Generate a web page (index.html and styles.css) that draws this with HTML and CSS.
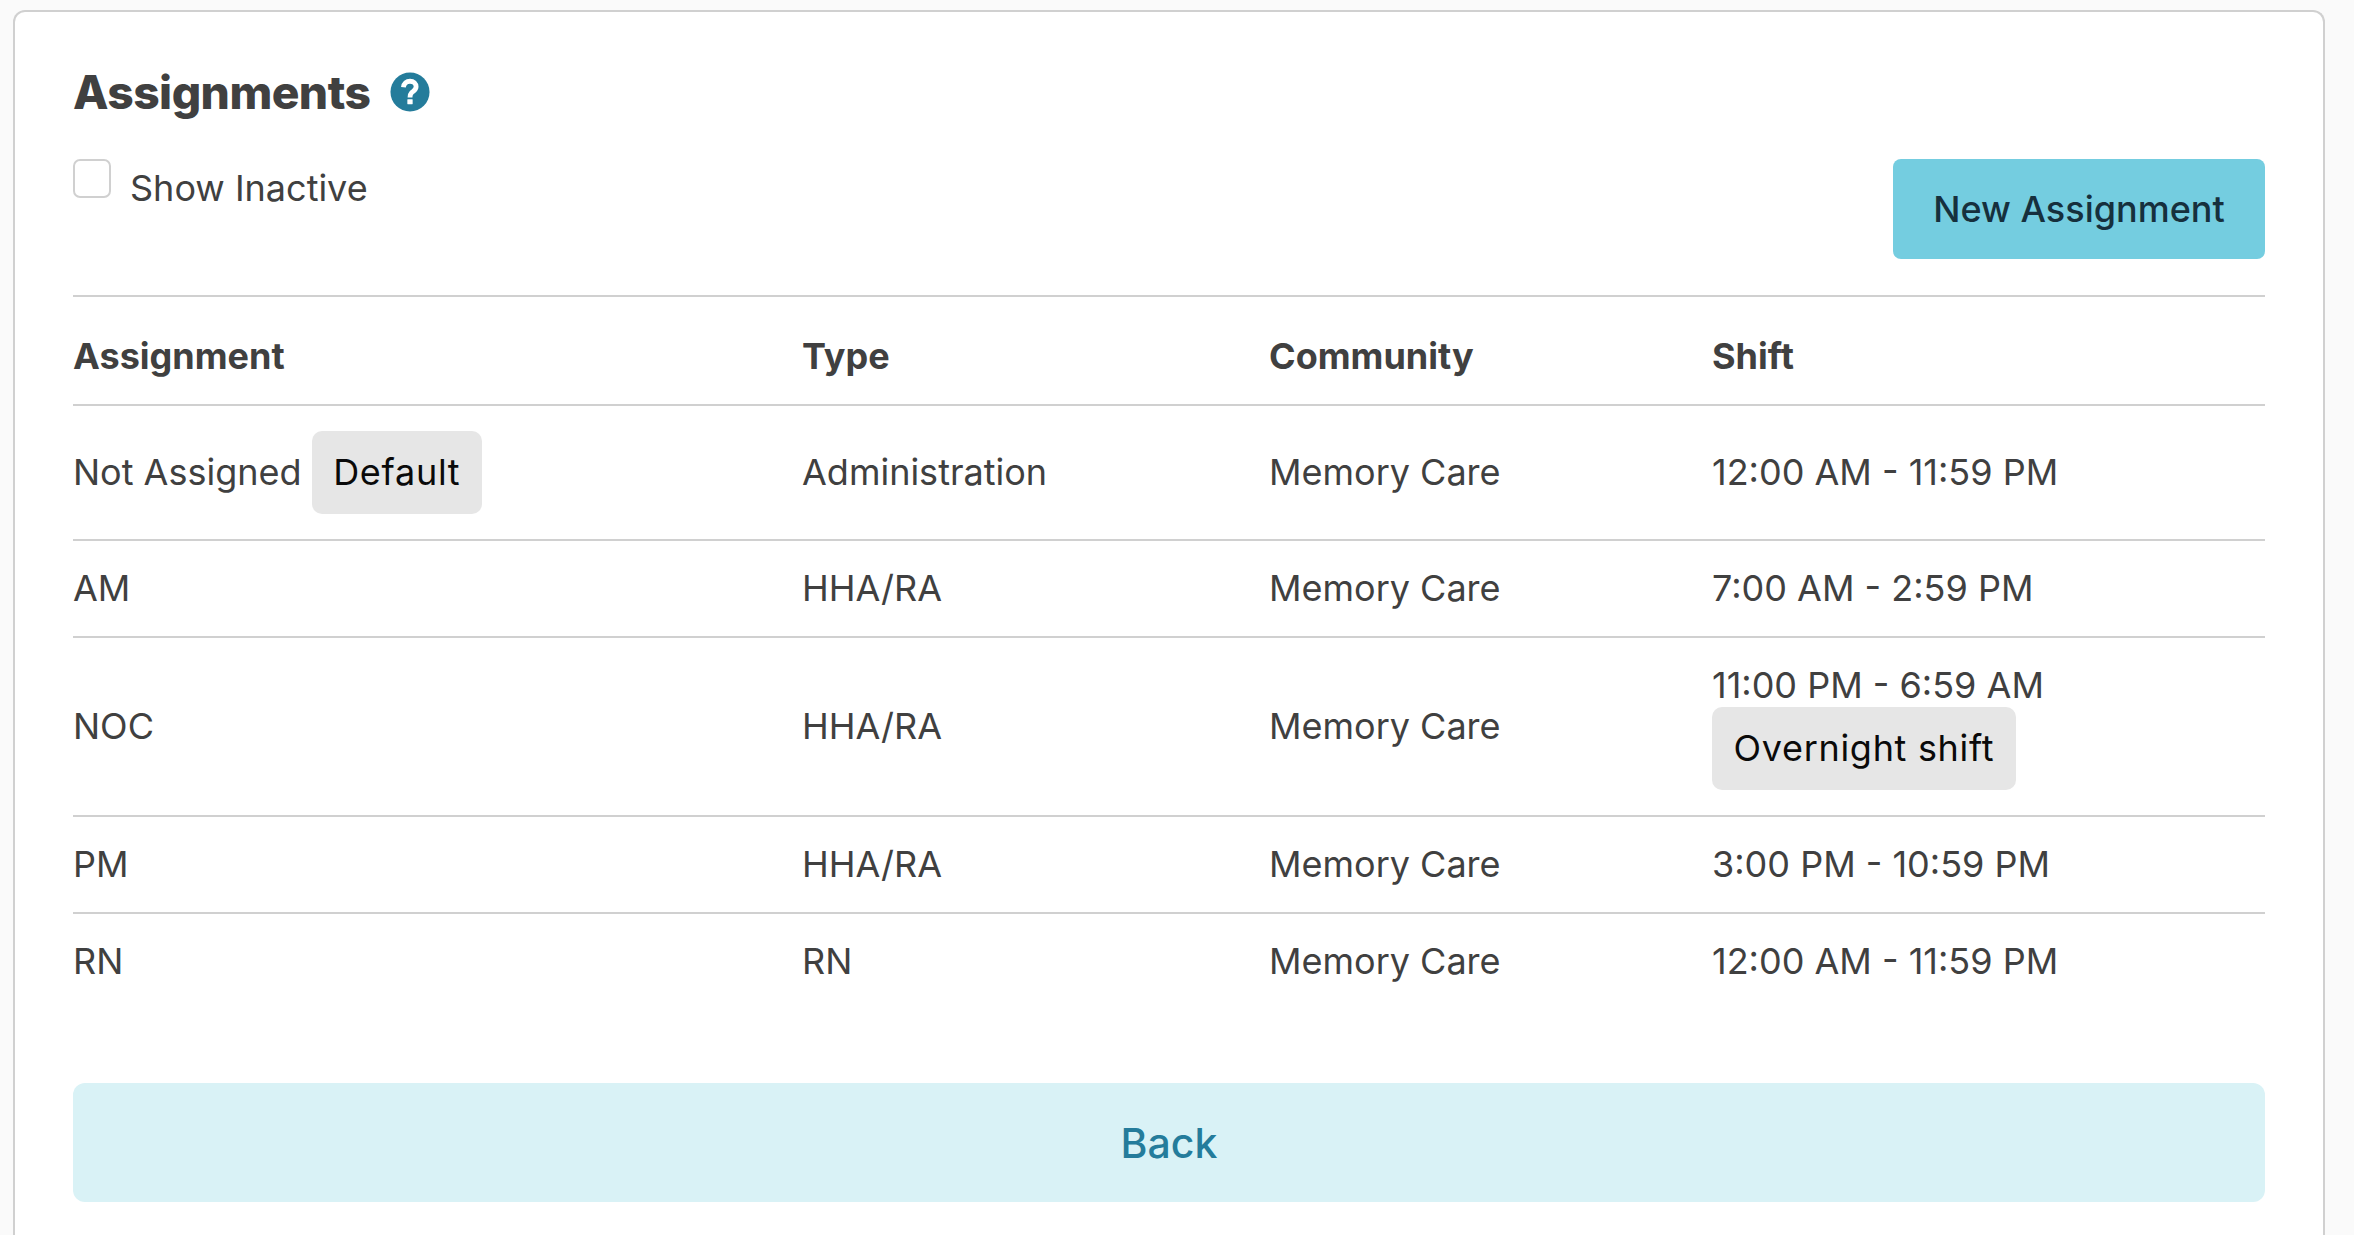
FILE: index.html
```html
<!DOCTYPE html>
<html lang="en">
<head>
<meta charset="utf-8">
<title>Assignments</title>
<link rel="stylesheet" href="styles.css">
</head>
<body>
<main class="card">
  <h2 class="title">Assignments
    <svg class="help" viewBox="0 0 512 512" width="40" height="40">
      <circle class="help-disc" cx="256" cy="256" r="250"/>
      <path class="help-curve" d="M172 196C176 148 212 118 256 118C302 118 334 148 334 190C334 232 296 246 274 268C262 280 256 292 256 326"/>
      <rect class="help-dot" x="222" y="350" width="68" height="62" rx="5"/>
    </svg>
  </h2>
  <div class="toolbar">
    <label class="check"><span class="box"></span><span class="check-text">Show Inactive</span></label>
    <button class="new">New Assignment</button>
  </div>
  <table class="grid">
    <thead>
      <tr><th class="c1">Assignment</th><th class="c2">Type</th><th class="c3">Community</th><th>Shift</th></tr>
    </thead>
    <tbody>
      <tr><td>Not Assigned <span class="badge">Default</span></td><td>Administration</td><td>Memory Care</td><td>12:00 AM - 11:59 PM</td></tr>
      <tr><td>AM</td><td>HHA/RA</td><td>Memory Care</td><td>7:00 AM - 2:59 PM</td></tr>
      <tr><td>NOC</td><td>HHA/RA</td><td>Memory Care</td><td>11:00 PM - 6:59 AM<br><span class="badge badge-block">Overnight shift</span></td></tr>
      <tr><td>PM</td><td>HHA/RA</td><td>Memory Care</td><td>3:00 PM - 10:59 PM</td></tr>
      <tr><td>RN</td><td>RN</td><td>Memory Care</td><td>12:00 AM - 11:59 PM</td></tr>
    </tbody>
  </table>
  <button class="back">Back</button>
</main>
</body>
</html>
```
FILE: styles.css
```css
* { box-sizing: border-box; }
html, body { margin: 0; height: 100%; overflow: hidden; }
body { padding: 10px 29px 0 13px; background: #fafafa; font-family: Inter, sans-serif; color: #404040; }
.card { height: 100%; padding: 50px 58px 0; overflow: hidden; background: #fff; border: 2px solid #d0d0d0; border-bottom: 0; border-radius: 12px 12px 0 0; }
.title { display: flex; align-items: center; gap: 20px; margin: 0; font-size: 46.2px; line-height: 60px; font-weight: 800; letter-spacing: -0.55px; }
.help-disc { fill: #247c9b; }
.help-curve { fill: none; stroke: #fff; stroke-width: 62; }
.help-dot { fill: #fff; }
.toolbar { display: flex; justify-content: space-between; align-items: flex-start; margin-top: 37px; padding-bottom: 36px; border-bottom: 2px solid #d0d0d0; }
.check { display: flex; align-items: flex-start; gap: 19px; font-size: 36px; line-height: 54px; }
.box { width: 38px; height: 39px; background: #fff; border: 2px solid #d0d0d0; border-radius: 7px; }
.check-text { margin-top: 2px; }
.new { width: 372px; height: 100px; border: 0; border-radius: 8px; background: #74cde0; color: #16303d; font: 500 36px Inter, sans-serif; }
.grid { width: 100%; border-collapse: collapse; table-layout: fixed; font-size: 36px; }
.grid th { height: 108px; padding: 10px 0 0; text-align: left; font-weight: 700; border-bottom: 2px solid #d0d0d0; }
.c1 { width: 729px; }
.c2 { width: 467px; }
.c3 { width: 443px; }
.grid td { padding: 25px 0; line-height: 45px; border-bottom: 2px solid #d0d0d0; vertical-align: middle; }
.grid tr:last-child td { border-bottom: 0; }
.badge { display: inline-block; height: 83px; padding: 0 21.5px; line-height: 83px; letter-spacing: 0.7px; border-radius: 10px; background: #e6e6e6; color: #0a0a0a; }
.badge-block { margin-top: -1px; }
.back { display: block; width: 100%; height: 119px; margin-top: 74px; border: 0; border-radius: 12px; background: #d9f2f6; color: #247c9b; font: 500 41px Inter, sans-serif; }
```
